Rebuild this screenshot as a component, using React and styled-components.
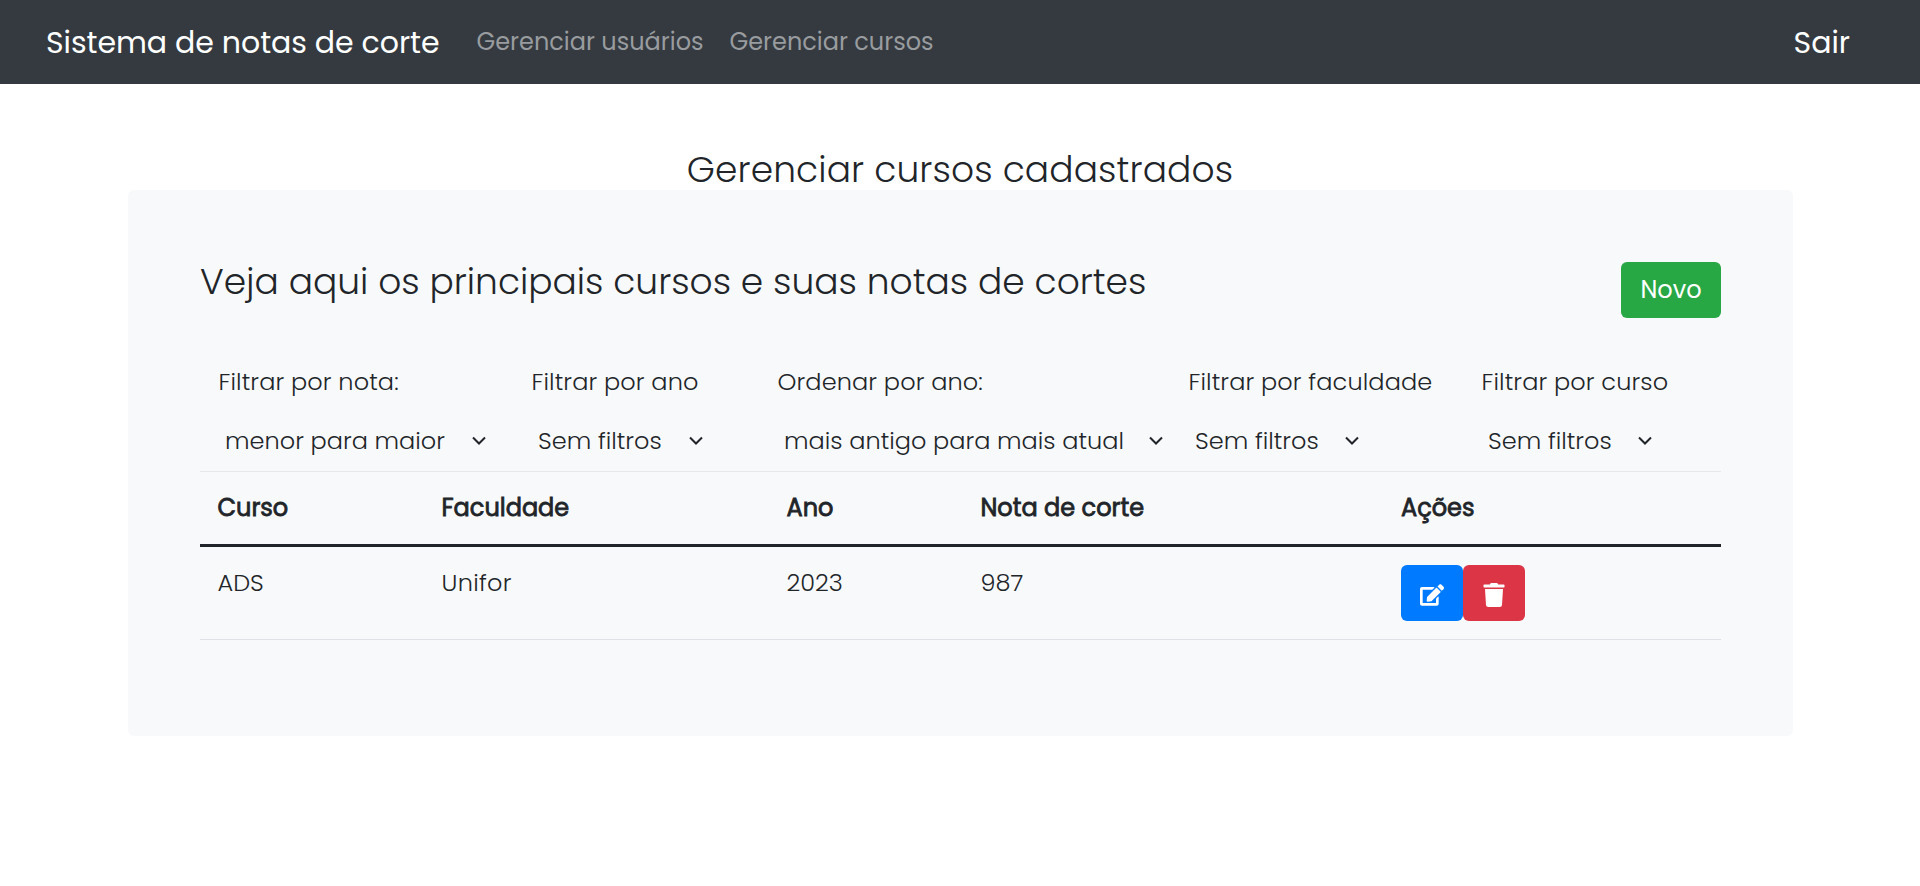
import React from 'react';
import styled, { createGlobalStyle } from 'styled-components';
import { FaEdit, FaTrash } from 'react-icons/fa';

const GlobalStyle = createGlobalStyle`
  *, *::before, *::after { box-sizing: border-box; }
  body {
    margin: 0;
    background: #fff;
    color: #212529;
    font-family: Poppins, Inter, "Liberation Sans", sans-serif;
    font-size: 24px;
    font-weight: 300;
    line-height: 36px;
  }
`;

const Text = styled.span`
  letter-spacing: ${(p) => p.$track || 0}px;
  white-space: nowrap;
`;

const Navbar = styled.nav`
  display: flex;
  align-items: center;
  height: 84px;
  padding: 0 70px 0 46px;
  background: #343a40;
`;

const Brand = styled.a`
  width: 430.5px;
  padding-top: 1px;
  color: #fff;
  font-size: 30px;
  font-weight: 400;
`;

const NavLink = styled.a`
  width: 253px;
  color: #999c9f;
  font-weight: 400;
`;

const Logout = styled.a`
  margin-left: auto;
  padding-top: 1px;
  color: #fff;
  font-size: 30px;
  font-weight: 400;
`;

const Title = styled.h1`
  margin: 64px 0 0;
  height: 42px;
  line-height: 44px;
  text-align: center;
  font-size: 36px;
  font-weight: 300;
`;

const Panel = styled.main`
  width: 1665px;
  height: 546px;
  margin-left: 128px;
  padding: 72px;
  border-radius: 6px;
  background: #f8f9fa;
`;

const PanelHeader = styled.header`
  display: flex;
  justify-content: space-between;
  height: 102px;
`;

const Subtitle = styled.h2`
  margin: 0;
  font-size: 36px;
  line-height: 39px;
  font-weight: 300;
`;

const Button = styled.button`
  display: flex;
  align-items: center;
  justify-content: center;
  width: 100px;
  height: 56px;
  padding: 0;
  border: 0;
  border-radius: 6px;
  background: ${(p) => p.$color};
  color: #fff;
  font: inherit;
  font-weight: 400;
`;

const IconButton = styled(Button)`
  width: 62px;
  padding-top: 4px;
`;

const Filters = styled.div`
  display: grid;
  grid-template-columns: 313px 246px 411px 293px 1fr;
  height: 108px;
  padding-left: 18.5px;
  border-bottom: 1px solid #e6e8eb;
`;

const Filter = styled.div`
  display: flex;
  flex-direction: column;
  gap: 23px;
`;

const Select = styled.div`
  display: flex;
  align-items: center;
  justify-content: space-between;
  width: ${(p) => p.$width}px;
  padding-left: 6.5px;
`;

const Row = styled.div`
  display: grid;
  grid-template-columns: 224px 345px 194px 420.5px 1fr;
  height: 93px;
  padding: 18px 0 0 17.5px;
  border-bottom: 1px solid #dee2e6;
`;

const HeadRow = styled(Row)`
  height: 75px;
  border-bottom: 3px solid #212529;
  font-weight: 400;
  -webkit-text-stroke: 0.8px #212529;
`;

const Actions = styled.div`
  display: flex;
`;

const Chevron = () => (
  <svg width="14" height="10" viewBox="0 0 14 10" fill="none" stroke="#212529" strokeWidth="2">
    <path d="M1 1.5 7 7.5 13 1.5" />
  </svg>
);

const filters = [
  { label: 'Filtrar por nota:', value: 'menor para maior', width: 267 },
  { label: 'Filtrar por ano', value: 'Sem filtros', width: 171 },
  { label: 'Ordenar por ano:', value: 'mais antigo para mais atual', width: 385 },
  { label: 'Filtrar por faculdade', value: 'Sem filtros', width: 170 },
  { label: 'Filtrar por curso', value: 'Sem filtros', width: 170 },
];
const columns = ['Curso', 'Faculdade', 'Ano', 'Nota de corte', 'Ações'];
const course = ['ADS', 'Unifor', '2023', '987'];

export default function App() {
  return (
    <>
      <GlobalStyle />
      <Navbar>
        <Brand><Text $track={-0.04}>Sistema de notas de corte</Text></Brand>
        <NavLink><Text>Gerenciar usuários</Text></NavLink>
        <NavLink><Text>Gerenciar cursos</Text></NavLink>
        <Logout><Text>Sair</Text></Logout>
      </Navbar>
      <Title><Text $track={0.12}>Gerenciar cursos cadastrados</Text></Title>
      <Panel>
        <PanelHeader>
          <Subtitle><Text>Veja aqui os principais cursos e suas notas de cortes</Text></Subtitle>
          <Button $color="#28a745"><Text>Novo</Text></Button>
        </PanelHeader>
        <Filters>
          {filters.map((f) => (
            <Filter key={f.label}>
              <Text $track={0.12}>{f.label}</Text>
              <Select $width={f.width}>
                <Text $track={0.03}>{f.value}</Text>
                <Chevron />
              </Select>
            </Filter>
          ))}
        </Filters>
        <HeadRow>
          {columns.map((c) => <Text key={c}>{c}</Text>)}
        </HeadRow>
        <Row>
          {course.map((c) => <Text key={c} $track={c === 'Unifor' ? 0.3 : 0}>{c}</Text>)}
          <Actions>
            <IconButton $color="#007bff"><FaEdit size={24} /></IconButton>
            <IconButton $color="#dc3545"><FaTrash size={24} /></IconButton>
          </Actions>
        </Row>
      </Panel>
    </>
  );
}
